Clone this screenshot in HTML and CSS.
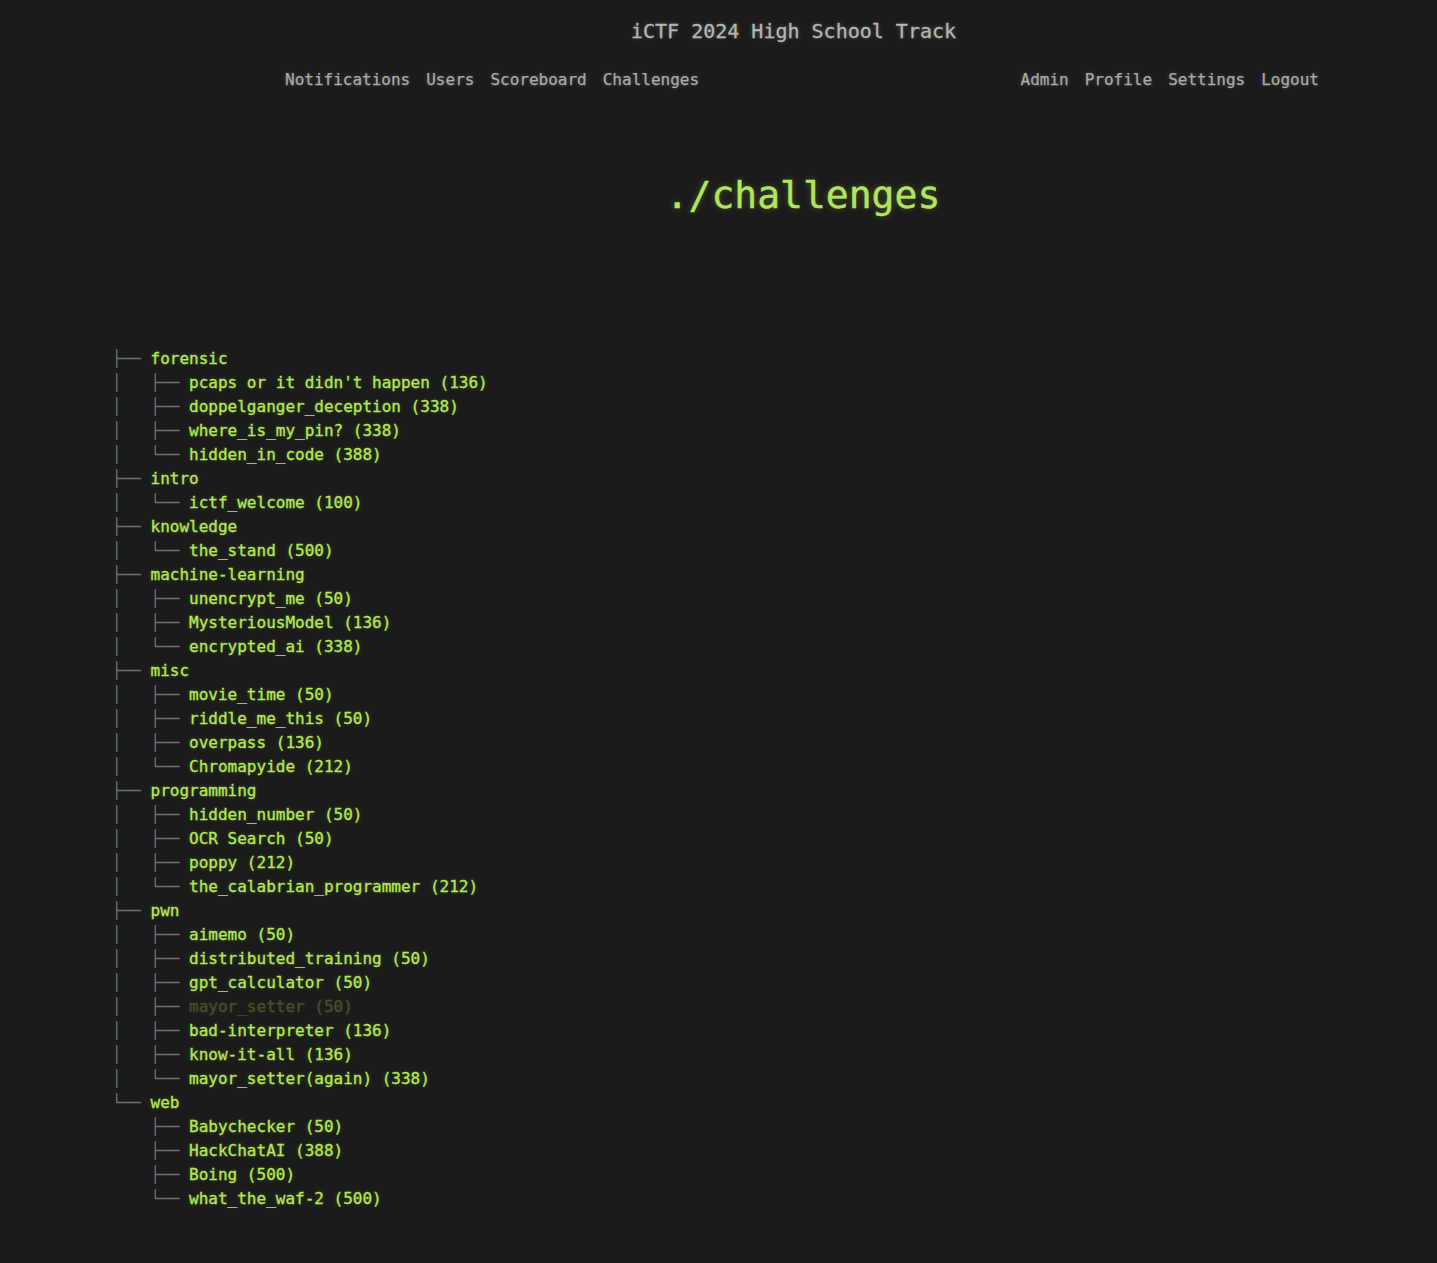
FILE: index.html
```html
<!DOCTYPE html>
<html lang="en">
<head>
<meta charset="utf-8">
<title>iCTF 2024 High School Track</title>
<link rel="stylesheet" href="styles.css">
</head>
<body>
<header class="site-header">
  <div class="site-title">iCTF 2024 High School Track</div>
  <nav class="nav">
    <div class="nav-group">
      <a class="nav-link" href="#">Notifications</a>
      <a class="nav-link" href="#">Users</a>
      <a class="nav-link" href="#">Scoreboard</a>
      <a class="nav-link" href="#">Challenges</a>
    </div>
    <div class="nav-group">
      <a class="nav-link" href="#">Admin</a>
      <a class="nav-link" href="#">Profile</a>
      <a class="nav-link" href="#">Settings</a>
      <a class="nav-link" href="#">Logout</a>
    </div>
  </nav>
</header>
<main class="main">
  <h1 class="page-title">./challenges</h1>
  <div class="tree">
    <div class="row"><span class="br">├── </span><span class="cat">forensic</span></div>
    <div class="row"><span class="br">│   ├── </span><a class="chal" href="#">pcaps or it didn't happen (136)</a></div>
    <div class="row"><span class="br">│   ├── </span><a class="chal" href="#">doppelganger_deception (338)</a></div>
    <div class="row"><span class="br">│   ├── </span><a class="chal" href="#">where_is_my_pin? (338)</a></div>
    <div class="row"><span class="br">│   └── </span><a class="chal" href="#">hidden_in_code (388)</a></div>
    <div class="row"><span class="br">├── </span><span class="cat">intro</span></div>
    <div class="row"><span class="br">│   └── </span><a class="chal" href="#">ictf_welcome (100)</a></div>
    <div class="row"><span class="br">├── </span><span class="cat">knowledge</span></div>
    <div class="row"><span class="br">│   └── </span><a class="chal" href="#">the_stand (500)</a></div>
    <div class="row"><span class="br">├── </span><span class="cat">machine-learning</span></div>
    <div class="row"><span class="br">│   ├── </span><a class="chal" href="#">unencrypt_me (50)</a></div>
    <div class="row"><span class="br">│   ├── </span><a class="chal" href="#">MysteriousModel (136)</a></div>
    <div class="row"><span class="br">│   └── </span><a class="chal" href="#">encrypted_ai (338)</a></div>
    <div class="row"><span class="br">├── </span><span class="cat">misc</span></div>
    <div class="row"><span class="br">│   ├── </span><a class="chal" href="#">movie_time (50)</a></div>
    <div class="row"><span class="br">│   ├── </span><a class="chal" href="#">riddle_me_this (50)</a></div>
    <div class="row"><span class="br">│   ├── </span><a class="chal" href="#">overpass (136)</a></div>
    <div class="row"><span class="br">│   └── </span><a class="chal" href="#">Chromapyide (212)</a></div>
    <div class="row"><span class="br">├── </span><span class="cat">programming</span></div>
    <div class="row"><span class="br">│   ├── </span><a class="chal" href="#">hidden_number (50)</a></div>
    <div class="row"><span class="br">│   ├── </span><a class="chal" href="#">OCR Search (50)</a></div>
    <div class="row"><span class="br">│   ├── </span><a class="chal" href="#">poppy (212)</a></div>
    <div class="row"><span class="br">│   └── </span><a class="chal" href="#">the_calabrian_programmer (212)</a></div>
    <div class="row"><span class="br">├── </span><span class="cat">pwn</span></div>
    <div class="row"><span class="br">│   ├── </span><a class="chal" href="#">aimemo (50)</a></div>
    <div class="row"><span class="br">│   ├── </span><a class="chal" href="#">distributed_training (50)</a></div>
    <div class="row"><span class="br">│   ├── </span><a class="chal" href="#">gpt_calculator (50)</a></div>
    <div class="row"><span class="br">│   ├── </span><a class="chal chal-hidden" href="#">mayor_setter (50)</a></div>
    <div class="row"><span class="br">│   ├── </span><a class="chal" href="#">bad-interpreter (136)</a></div>
    <div class="row"><span class="br">│   ├── </span><a class="chal" href="#">know-it-all (136)</a></div>
    <div class="row"><span class="br">│   └── </span><a class="chal" href="#">mayor_setter(again) (338)</a></div>
    <div class="row"><span class="br">└── </span><span class="cat">web</span></div>
    <div class="row"><span class="br">    ├── </span><a class="chal" href="#">Babychecker (50)</a></div>
    <div class="row"><span class="br">    ├── </span><a class="chal" href="#">HackChatAI (388)</a></div>
    <div class="row"><span class="br">    ├── </span><a class="chal" href="#">Boing (500)</a></div>
    <div class="row"><span class="br">    └── </span><a class="chal" href="#">what_the_waf-2 (500)</a></div>
  </div>
</main>
</body>
</html>
```

FILE: styles.css
```css
html, body {
  margin: 0;
  padding: 0;
}

body {
  background-color: #1b1b1b;
  color: #b5e853;
  font-family: "DejaVu Sans Mono", "Liberation Mono", monospace;
  font-size: 16px;
  line-height: 24px;
  min-height: 1263px;
}

a {
  text-decoration: none;
}

.site-header {
  padding-top: 19px;
}

.site-title {
  margin-left: 150px;
  text-align: center;
  font-size: 20px;
  line-height: 24px;
  color: #b4b4b4;
  -webkit-text-stroke: 0.3px #b4b4b4;
  text-shadow: 0 0 4px rgba(200, 200, 200, 0.35);
}

.nav {
  display: flex;
  justify-content: space-between;
  margin-top: 25px;
  margin-left: 285px;
  width: 1034px;
  line-height: 24px;
}

.nav-group {
  display: flex;
  gap: 16px;
}

.nav-link {
  color: #a9a9a9;
  -webkit-text-stroke: 0.25px #a9a9a9;
  text-shadow: 0 0 4px rgba(200, 200, 200, 0.3);
}

.main {
  padding-top: 81px;
}

.page-title {
  margin: 0 0 0 169px;
  text-align: center;
  font-size: 38px;
  line-height: 44px;
  font-weight: normal;
  color: #b2e65a;
  -webkit-text-stroke: 0.4px #b2e65a;
  text-shadow: 0 0 6px rgba(181, 232, 83, 0.35);
}

.tree {
  margin-top: 130px;
  margin-left: 112px;
  padding-bottom: 40px;
}

.row {
  white-space: pre;
  line-height: 24px;
  height: 24px;
}

.br {
  color: #707070;
}

.cat,
.chal {
  color: #b5e853;
  -webkit-text-stroke: 0.3px #b5e853;
  text-shadow: 0 0 4px rgba(181, 232, 83, 0.3);
}

.chal-hidden {
  opacity: 0.25;
}
```
